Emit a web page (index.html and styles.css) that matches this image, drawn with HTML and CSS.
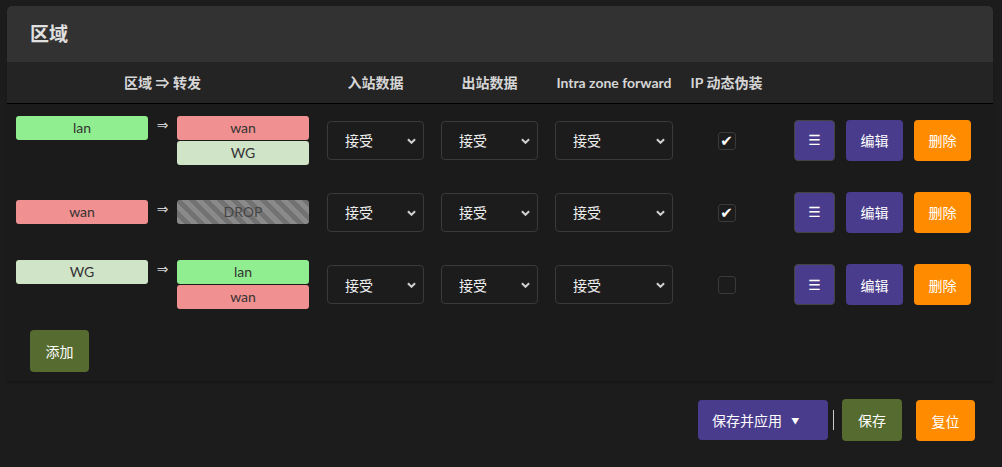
FILE: index.html
```html
<!DOCTYPE html>
<html lang="zh">
<head>
<meta charset="utf-8">
<link rel="stylesheet" href="styles.css">
</head>
<body>
<div class="page">
  <div class="section">
    <div class="title">区域</div>
    <div class="table">
      <div class="row head">
        <div class="c c1">区域 ⇒ 转发</div>
        <div class="c">入站数据</div>
        <div class="c">出站数据</div>
        <div class="c">Intra zone forward</div>
        <div class="c">IP 动态伪装</div>
        <div class="c"></div>
      </div>

      <div class="row body">
        <div class="c zones">
          <div class="src"><span class="zone lan">lan</span></div>
          <span class="arrow">⇒</span>
          <div class="dst"><span class="zone wan">wan</span><span class="zone wg">WG</span></div>
        </div>
        <div class="c"><span class="sel w97"><select><option>接受</option></select><svg class="chev" viewBox="0 0 10 6"><path d="M1 1l4 4 4-4" /></svg></span></div>
        <div class="c"><span class="sel w97"><select><option>接受</option></select><svg class="chev" viewBox="0 0 10 6"><path d="M1 1l4 4 4-4" /></svg></span></div>
        <div class="c"><span class="sel w118"><select><option>接受</option></select><svg class="chev" viewBox="0 0 10 6"><path d="M1 1l4 4 4-4" /></svg></span></div>
        <div class="c"><span class="cb on">✔</span></div>
        <div class="c actions"><button class="btn menu">☰</button><button class="btn edit">编辑</button><button class="btn del">删除</button></div>
      </div>

      <div class="row body">
        <div class="c zones">
          <div class="src"><span class="zone wan">wan</span></div>
          <span class="arrow">⇒</span>
          <div class="dst"><span class="zone drop">DROP</span></div>
        </div>
        <div class="c"><span class="sel w97"><select><option>接受</option></select><svg class="chev" viewBox="0 0 10 6"><path d="M1 1l4 4 4-4" /></svg></span></div>
        <div class="c"><span class="sel w97"><select><option>接受</option></select><svg class="chev" viewBox="0 0 10 6"><path d="M1 1l4 4 4-4" /></svg></span></div>
        <div class="c"><span class="sel w118"><select><option>接受</option></select><svg class="chev" viewBox="0 0 10 6"><path d="M1 1l4 4 4-4" /></svg></span></div>
        <div class="c"><span class="cb on">✔</span></div>
        <div class="c actions"><button class="btn menu">☰</button><button class="btn edit">编辑</button><button class="btn del">删除</button></div>
      </div>

      <div class="row body last">
        <div class="c zones">
          <div class="src"><span class="zone wg">WG</span></div>
          <span class="arrow">⇒</span>
          <div class="dst"><span class="zone lan">lan</span><span class="zone wan">wan</span></div>
        </div>
        <div class="c"><span class="sel w97"><select><option>接受</option></select><svg class="chev" viewBox="0 0 10 6"><path d="M1 1l4 4 4-4" /></svg></span></div>
        <div class="c"><span class="sel w97"><select><option>接受</option></select><svg class="chev" viewBox="0 0 10 6"><path d="M1 1l4 4 4-4" /></svg></span></div>
        <div class="c"><span class="sel w118"><select><option>接受</option></select><svg class="chev" viewBox="0 0 10 6"><path d="M1 1l4 4 4-4" /></svg></span></div>
        <div class="c"><span class="cb"></span></div>
        <div class="c actions"><button class="btn menu">☰</button><button class="btn edit">编辑</button><button class="btn del">删除</button></div>
      </div>
    </div>
    <div class="add-wrap"><button class="btn add">添加</button></div>
  </div>

  <div class="footer">
    <button class="btn apply">保存并应用 <span class="tri">▼</span></button>
    <span class="sep"></span>
    <button class="btn save">保存</button>
    <button class="btn reset">复位</button>
  </div>
</div>
</body>
</html>
```
FILE: styles.css
```css
* { box-sizing: border-box; }
html, body {
  margin: 0;
  background: #1c1c1c;
  color: #ddd;
  font-family: Lato, "Noto Sans CJK SC", sans-serif;
}
.page {
  width: 1002px;
  height: 467px;
  padding: 6px 9px 0 7px;
}
.section {
  background: #1b1b1b;
  box-shadow: 0 2px 2px rgba(0,0,0,0.25);
  border-radius: 4px 4px 0 0;
}
.title {
  height: 56px;
  background: #323232;
  border-radius: 5px 5px 0 0;
  padding: 0 0 0 23px;
  font-size: 19px;
  font-weight: bold;
  line-height: 56px;
  color: #e0e0e0;
}
.row {
  display: grid;
  grid-template-columns: 311px 115px 113px 136px 89px 1fr;
}
.row .c {
  display: flex;
  align-items: center;
  justify-content: center;
}
.head {
  height: 42px;
  background: #242424;
  border-bottom: 1px solid #000;
  font-size: 14px;
  font-weight: bold;
  color: #d6d6d6;
}
.head .c { padding-bottom: 1px; }
.body { height: 72px; }
.body.last { height: 73px; }
.row .zones {
  display: grid;
  grid-template-columns: 132px 29px 132px;
  align-content: center;
  align-items: start;
  padding: 0 9px;
}
.arrow {
  text-align: center;
  font-family: "DejaVu Sans", sans-serif;
  font-size: 14px;
  line-height: 19px;
  color: #cfcfcf;
}
.dst { display: flex; flex-direction: column; gap: 1px; }
.zone {
  display: block;
  height: 24px;
  border-radius: 3px;
  text-align: center;
  font-size: 14px;
  line-height: 24px;
  color: #333;
}
.lan { background: #90ee90; }
.wan { background: #f09090; }
.wg { background: #d0e4c8; }
.drop {
  background: repeating-linear-gradient(45deg, #8a8a8a 0 5px, #727272 5px 10px);
  color: #454545;
}
.sel {
  position: relative;
  display: inline-block;
  height: 39px;
}
.w97 { width: 97px; }
.w118 { width: 118px; }
.sel select {
  appearance: none;
  -webkit-appearance: none;
  width: 100%;
  height: 100%;
  background: #1c1c1c;
  border: 1px solid #3a3a3a;
  border-radius: 4px;
  color: #eee;
  font-family: "Noto Sans CJK SC", sans-serif;
  font-size: 14px;
  padding: 0 0 0 17px;
}
.chev {
  position: absolute;
  right: 8px;
  top: 17px;
  width: 9px;
  height: 6px;
  fill: none;
  stroke: #d0d0d0;
  stroke-width: 2.2;
}
.cb {
  width: 18px;
  height: 18px;
  border: 1px solid #3a3a3a;
  border-radius: 3px;
  background: #1c1c1c;
  color: #fff;
  font-family: "DejaVu Sans", sans-serif;
  font-size: 15px;
  font-weight: bold;
  line-height: 16px;
  text-align: center;
  margin-top: 1px;
}
.row .actions {
  justify-content: flex-start;
  padding-left: 23px;
  gap: 11px;
}
.btn {
  font-family: "Noto Sans CJK SC", sans-serif;
  font-size: 14px;
  color: #fff;
  border: none;
  border-radius: 4px;
  padding: 0;
  cursor: pointer;
}
.menu {
  width: 41px;
  height: 41px;
  background: #4a3c8c;
  border: 1px solid #444;
  font-family: "DejaVu Sans", sans-serif;
  font-size: 14px;
  font-weight: normal;
}
.edit { width: 57px; height: 41px; background: #4a3c8c; }
.del { width: 57px; height: 41px; background: #ff8c00; }
.add-wrap {
  padding: 9px 0 9px 23px;
  height: 60px;
}
.add {
  width: 59px;
  height: 42px;
  background: #556b2f;
}
.footer {
  display: flex;
  justify-content: flex-end;
  align-items: flex-start;
  padding: 18px 18px 0 0;
  height: 79px;
}
.apply {
  width: 130px;
  height: 40px;
  margin-top: 1px;
  background: #4a3c8c;
  text-align: left;
  padding-left: 14px;
}
.tri { font-size: 8px; margin-left: 6px; vertical-align: 2px; }
.sep {
  width: 1px;
  height: 20px;
  background: #ccc;
  margin: 11px 8px 0 5px;
}
.save {
  width: 60px;
  height: 42px;
  background: #556b2f;
}
.reset {
  width: 59px;
  height: 41px;
  margin-top: 1px;
  margin-left: 14px;
  background: #ff8c00;
}
```
